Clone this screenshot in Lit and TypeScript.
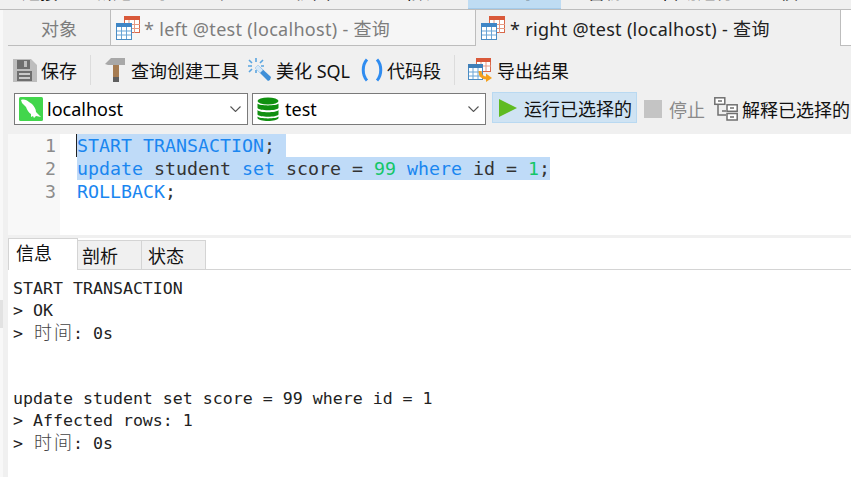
import { LitElement, html, css } from "lit";
import { customElement } from "lit/decorators.js";

const tableIcon = () => html`<svg class="ic" width="24" height="24" viewBox="0 0 24 24">
  <rect x="8.500" y="0.500" width="15" height="16" fill="#fff" stroke="#d9694a"/>
  <rect x="8" y="0" width="16" height="4" fill="#d9593a"/>
  <path d="M13 4v13M18.500 4v13M9 8.500h15M9 12.500h15" stroke="#e59a84" fill="none"/>
  <rect x="0.500" y="7.500" width="15" height="16" fill="#fff" stroke="#4a8cc4"/>
  <rect x="0" y="7" width="16" height="4" fill="#3f86c6"/>
  <path d="M5.500 11v12M10.500 11v12M1 15h14M1 19h14" stroke="#6aa5d6" fill="none"/>
</svg>`;

const saveIcon = html`<svg class="ic" width="24" height="24" viewBox="0 0 24 24">
  <path d="M0 1h18l6 6v17H0z" fill="#bdbdbd"/>
  <rect x="4" y="2" width="13" height="9" fill="#6e6e6e"/>
  <rect x="11" y="3" width="3" height="6" fill="#bdbdbd"/>
  <rect x="4" y="13" width="15" height="10" fill="#6e6e6e"/>
  <path d="M6 16h11M6 20h11" stroke="#e8e8e8" stroke-width="1.500"/>
</svg>`;

const hammerIcon = html`<svg class="ic" width="20" height="24" viewBox="0 0 20 24">
  <path d="M0 6 6 0h14v7H3z" fill="#a8a8a8"/>
  <rect x="8" y="7" width="6" height="13" fill="#a67c52"/>
  <rect x="8" y="19" width="6" height="5" fill="#5f5f5f"/>
</svg>`;

const wandIcon = html`<svg class="ic" width="24" height="24" viewBox="0 0 24 24">
  <path d="M8 10l3-3 13 12-1 3-2 1z" fill="#3f8fd8"/>
  <path d="M8 10l3-3 5 5-3 3z" fill="#d6e8f7"/>
  <path d="M9 0v4M9 12v3M1 8h4M2 2l3 3M16 2l-3 3M2 14l3-3M14 8h3" stroke="#5aa5e0" stroke-width="1.600" fill="none"/>
</svg>`;

const parensIcon = html`<svg class="ic" width="22" height="24" viewBox="0 0 22 24" fill="none" stroke="#2f8cf0" stroke-width="3">
  <path d="M6 1.500C1 7 1 17 6 22.500M16 1.500c5 5.500 5 15.500 0 21"/>
</svg>`;

const exportIcon = html`<svg class="ic" width="24" height="24" viewBox="0 0 24 24">
  <rect x="8.500" y="0.500" width="14" height="13" fill="#fff" stroke="#d9694a"/>
  <rect x="8" y="0" width="15" height="4" fill="#d9593a"/>
  <path d="M13 4v9M18 4v9M9 8h14" stroke="#e59a84" fill="none"/>
  <rect x="0.500" y="6.500" width="14" height="15" fill="#fff" stroke="#4a8cc4"/>
  <rect x="0" y="6" width="15" height="4" fill="#3f7fb8"/>
  <path d="M5 10v11M10 10v11M1 14h13M1 18h13" stroke="#6aa5d6" fill="none"/>
  <path d="M12 13c0 5 3 7 7 7" stroke="#f4a01c" stroke-width="3" fill="none"/>
  <path d="M18 15.500l6 4.500-6 4z" fill="#f4a01c"/>
</svg>`;

const dolphinIcon = html`<svg class="ic" width="24" height="24" viewBox="0 0 24 24">
  <rect width="24" height="24" rx="1.500" fill="#42d64c"/>
  <path d="M2 3c3-1 6 0 8 2 1 1 2 1 3 2 2 2 4 5 4 8l5 5-5-1-2 2-1-2-2 1 0-3c-2-1-4-4-5-7L5 8 3 6z" fill="#fff"/>
</svg>`;

const dbIcon = html`<svg class="ic" width="22" height="24" viewBox="0 0 22 24" fill="#109010">
  <ellipse cx="11" cy="4" rx="10.500" ry="3.500"/>
  <path d="M.5 6.500C2 9 20 9 21.500 6.500V11C20 14 2 14 .5 11z"/>
  <path d="M.5 13C2 16 20 16 21.500 13v4.500C20 20.500 2 20.500 .5 17.500z"/>
  <path d="M.5 19.500C2 22 20 22 21.500 19.500V21c-1 4-20 4-21 0z"/>
</svg>`;

const chevron = html`<svg class="chev" width="11" height="6" viewBox="0 0 11 6" fill="none" stroke="#555" stroke-width="1.100"><path d="M.5.5l5 5 5-5"/></svg>`;

const playIcon = html`<svg class="ic" width="18" height="18" viewBox="0 0 18 18"><path d="M0 0l18 9L0 18z" fill="#5fbb22"/></svg>`;

const explainIcon = html`<svg class="ic" width="24" height="24" viewBox="0 0 24 24" fill="#fff" stroke="#707070" stroke-width="1.500">
  <path d="M4 8v10h8M8 14h4" fill="none"/>
  <rect x=".8" y=".8" width="10" height="6.500"/>
  <rect x="13" y="7.800" width="10.200" height="6.500"/>
  <rect x="13" y="16.500" width="10.200" height="6.500"/>
  <path d="M4 4h4M16 11h4M16 20h4" stroke-width="1.400"/>
</svg>`;

const menu = ["连接", "新建查询", "表", "视图", "函数", "查询", "备份", "自动运行", "模型"];

type Tok = [string, string];
const sqlLines: { toks: Tok[]; sel: string }[] = [
  { toks: [["k", "START TRANSACTION"], ["p", ";"]], sel: "s1" },
  {
    toks: [
      ["k", "update"], ["p", " student "], ["k", "set"], ["p", " score = "], ["n", "99"],
      ["p", " "], ["k", "where"], ["p", " id = "], ["n", "1"], ["p", ";"],
    ],
    sel: "s2",
  },
  { toks: [["k", "ROLLBACK"], ["p", ";"]], sel: "" },
];

const timeLine = html`&gt; <span class="cj">时</span><span class="cj">间</span>: 0s`;
const results = [
  html`START TRANSACTION`, html`&gt; OK`, timeLine, html``, html``,
  html`update student set score = 99 where id = 1`, html`&gt; Affected rows: 1`, timeLine,
];

@customElement("app-root")
export class AppRoot extends LitElement {
  static styles = css`
    :host {
      display: block;
      width: 851px;
      height: 477px;
      overflow: hidden;
      background: linear-gradient(to right, #f8f8f8 3px, #f0f0f0 3px);
      font-family: "Noto Sans", "Noto Sans CJK SC", sans-serif;
      font-size: 18px;
      color: #111;
    }
    .ic { display: block; flex: none; }
    .menu {
      height: 9px;
      display: grid;
      grid-template-columns: 80px 102px 88px 85px 113px 93px 89px 95px 106px;
      overflow: hidden;
      background: #f0f0f0;
      border-bottom: 1px solid #bdbdbd;
    }
    .menu span {
      height: 3px;
      display: flex;
      justify-content: center;
      align-items: flex-end;
      line-height: 22px;
      white-space: nowrap;
    }
    .menu .on { height: 8px; background: #bfdcf3; border-bottom: 1px solid #a5cbea; align-items: flex-start; }
    .menu .on b { display: flex; align-items: flex-end; font-weight: 400; height: 3px; line-height: 22px; }
    .tabs { height: 36px; display: flex; margin-left: 8px; }
    .tab {
      display: flex; align-items: center; gap: 5px;
      box-sizing: border-box;
      border-right: 1px solid #bdbdbd;
      border-bottom: 1px solid #bdbdbd;
      color: #7d7d7d;
      white-space: nowrap;
      letter-spacing: .3px;
    }
    .t0 { width: 103px; justify-content: center; background: #f0f0f0; letter-spacing: 0; }
    .t1 { width: 365px; padding-left: 5px; gap: 4px; background: #f6f6f6; }
    .t2 { width: 365px; padding-left: 5px; background: #f0f0f0; border-bottom: none; color: #222; }
    .rest { flex: 1; background: #fff; border-bottom: 1px solid #bdbdbd; }
    .bar { height: 47px; display: flex; align-items: center; padding-left: 13px; white-space: nowrap; }
    .btn { display: flex; align-items: center; gap: 5px; }
    .b-save { gap: 4px; }
    .sep { width: 1px; height: 30px; background: #dcdcdc; margin: 0 14px 0 13px; }
    .b-ham { gap: 6px; }
    .b-wand { margin-left: 8px; }
    .b-par { margin-left: 11px; gap: 4px; }
    .b-exp { margin-left: -1px; }
    .row { height: 41px; display: flex; align-items: flex-start; padding-left: 14px; white-space: nowrap; }
    .combo {
      box-sizing: border-box; width: 234px; height: 32px;
      background: #fff; border: 1px solid #7a7a7a;
      display: flex; align-items: center; padding: 0 5px 0 4px; gap: 4px;
      margin-right: 4px; color: #000;
    }
    .c-db { gap: 6px; }
    .combo .chev { margin-left: auto; margin-right: 1px; }
    .run {
      box-sizing: border-box; width: 145px; height: 31px; margin: -1px 0 0 2px;
      background: #cfe3f3; border: 1px solid #b9d9f1;
      display: flex; align-items: center; padding-left: 6px; gap: 7px;
    }
    .stopbox { width: 18px; height: 18px; background: #c4c4c4; margin: 7px 0 0 7px; flex: none; }
    .stop { margin: 3px 0 0 7px; color: #8a8a8a; }
    .exp { margin: 3px 0 0 9px; gap: 4px; }
    .editor {
      height: 101px; margin-left: 8px; background: #fff; display: flex;
      font-family: "DejaVu Sans Mono", monospace; font-size: 18.27px; line-height: 23px;
    }
    .gutter { width: 52px; box-sizing: border-box; background: #f8f8f8; color: #8c8c8c; text-align: right; padding-right: 4px; }
    .code { flex: 1; padding-left: 17px; color: #333; }
    .line { height: 23px; white-space: pre; }
    .s1 { background: #bfdbf8; width: 209px; box-shadow: -1px 0 0 #222; }
    .s2 { background: #bfdbf8; width: 473px; }
    .k { color: #1a86f0; }
    .n { color: #13c667; }
    .p { color: #333; }
    .split { height: 3px; margin-left: 8px; background: #f0f0f0; }
    .rtabs {
      height: 32px; margin-left: 8px; background: #fff; box-sizing: border-box;
      border-bottom: 1px solid #d4d4d4; display: flex; align-items: flex-end;
    }
    .rt {
      box-sizing: border-box; height: 29px; background: #f0f0f0;
      border: 1px solid #d4d4d4; border-left: none; border-bottom: none;
      display: flex; align-items: center;
    }
    .r0 { width: 70px; height: 32px; background: #fff; border-left: 1px solid #d4d4d4; margin-bottom: -1px; padding: 0 0 5px 7px; }
    .r1 { width: 64px; padding-left: 4px; }
    .r2 { width: 64px; padding-left: 6px; }
    .body { height: 207px; display: flex; }
    .edge { width: 3px; padding-top: 30px; box-sizing: border-box; }
    .edge i { display: block; height: 28px; background: #e2e2e2; }
    .rail { width: 5px; }
    .out {
      flex: 1; padding: 8px 0 0 5px; background: #fff;
      font-family: "DejaVu Sans Mono", "Noto Sans CJK SC", monospace;
      font-size: 16.6px; line-height: 22px; color: #222; white-space: pre;
    }
    .out div { height: 22px; }
    .cj {
      display: inline-block; width: 20px; text-align: center; line-height: 1;
      font-family: "Noto Sans CJK SC", sans-serif; font-size: 18px; font-weight: 300; color: #444;
    }
  `;

  render() {
    return html`
      <div class="menu">
        ${menu.map((m, i) =>
          i === 5 ? html`<span class="on"><b>${m}</b></span>` : html`<span>${m}</span>`
        )}
      </div>
      <div class="tabs">
        <div class="tab t0">对象</div>
        <div class="tab t1">${tableIcon()}<span>* left @test (localhost) - 查询</span></div>
        <div class="tab t2">${tableIcon()}<span>* right @test (localhost) - 查询</span></div>
        <div class="rest"></div>
      </div>
      <div class="bar">
        <div class="btn b-save">${saveIcon}<span>保存</span></div>
        <div class="sep"></div>
        <div class="btn b-ham">${hammerIcon}<span>查询创建工具</span></div>
        <div class="btn b-wand">${wandIcon}<span>美化 SQL</span></div>
        <div class="btn b-par">${parensIcon}<span>代码段</span></div>
        <div class="sep"></div>
        <div class="btn b-exp">${exportIcon}<span>导出结果</span></div>
      </div>
      <div class="row">
        <div class="combo">${dolphinIcon}<span>localhost</span>${chevron}</div>
        <div class="combo c-db">${dbIcon}<span>test</span>${chevron}</div>
        <div class="run">${playIcon}<span>运行已选择的</span></div>
        <div class="stopbox"></div>
        <div class="stop">停止</div>
        <div class="btn exp">${explainIcon}<span>解释已选择的</span></div>
      </div>
      <div class="editor">
        <div class="gutter"><div>1</div><div>2</div><div>3</div></div>
        <div class="code">
          ${sqlLines.map(
            (l) => html`<div class="line ${l.sel}">${l.toks.map(
              ([c, t]) => html`<span class=${c}>${t}</span>`
            )}</div>`
          )}
        </div>
      </div>
      <div class="split"></div>
      <div class="rtabs">
        <div class="rt r0">信息</div>
        <div class="rt r1">剖析</div>
        <div class="rt r2">状态</div>
      </div>
      <div class="body">
        <div class="edge"><i></i></div>
        <div class="rail"></div>
        <div class="out">${results.map((r) => html`<div>${r}</div>`)}</div>
      </div>
    `;
  }
}
